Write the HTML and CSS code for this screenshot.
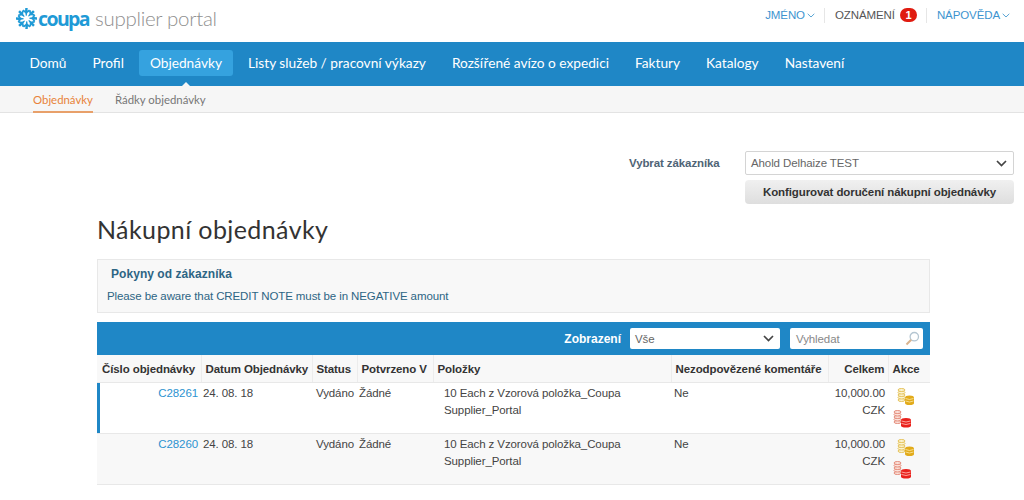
FILE: index.html
```html
<!DOCTYPE html>
<html lang="cs">
<head>
<meta charset="utf-8">
<title>Coupa supplier portal</title>
<link rel="stylesheet" href="styles.css">
</head>
<body>
<svg class="defs" width="0" height="0" aria-hidden="true">
  <symbol id="coins" viewBox="0 0 24 45">
    <g fill="#fbf3d0" stroke="#e6c35c" stroke-width="1">
      <ellipse cx="9.500" cy="15" rx="3.500" ry="1.500"/><ellipse cx="9.500" cy="12.500" rx="3.500" ry="1.500"/><ellipse cx="9.500" cy="10" rx="3.500" ry="1.500"/><ellipse cx="9.500" cy="7.500" rx="3.500" ry="1.500"/><ellipse cx="9.500" cy="5" rx="3.500" ry="1.500"/>
    </g>
    <path d="M13 12.500q0-2 4.500-2t4.500 2v5.500q0 2-4.500 2t-4.500-2z" fill="#e2ab1b"/>
    <path d="M13.500 13.500q4 2 8 0M13.500 16q4 2 8 0" fill="none" stroke="#fbe9a8" stroke-width=".8"/>
    <g fill="#fbe1da" stroke="#e58d7c" stroke-width="1">
      <ellipse cx="5.500" cy="37" rx="3.500" ry="1.500"/><ellipse cx="5.500" cy="34.500" rx="3.500" ry="1.500"/><ellipse cx="5.500" cy="32" rx="3.500" ry="1.500"/><ellipse cx="5.500" cy="29.500" rx="3.500" ry="1.500"/><ellipse cx="5.500" cy="27" rx="3.500" ry="1.500"/>
    </g>
    <path d="M9 35q0-2 5-2t5 2v5.500q0 2-5 2t-5-2z" fill="#e9211c"/>
    <path d="M9.500 36q4.500 2 9 0M9.500 38.500q4.500 2 9 0" fill="none" stroke="#ffc4ba" stroke-width=".8"/>
  </symbol>
</svg>
<header class="top">
  <div class="logo">
    <svg class="logo-star" width="21" height="21" viewBox="-11 -11 22 22" aria-hidden="true">
      <g fill="#1f9ad6">
        <path id="arm" d="M-1.300-11h2.600l-.3 2.800 1.700-1.100 1 1.500-2.900 2-.6 2.800h-.9l-.6-2.800-2.900-2 1-1.500 1.700 1.100z"/>
        <use href="#arm" transform="rotate(45)"/><use href="#arm" transform="rotate(90)"/><use href="#arm" transform="rotate(135)"/>
        <use href="#arm" transform="rotate(180)"/><use href="#arm" transform="rotate(225)"/><use href="#arm" transform="rotate(270)"/><use href="#arm" transform="rotate(315)"/>
      </g>
    </svg>
    <span class="logo-coupa">coupa</span>
    <span class="logo-sub">supplier portal</span>
  </div>
  <nav class="util">
    <a class="util-link">JMÉNO<svg class="chev" width="8" height="5" viewBox="0 0 8 5"><path d="M.7.8 4 4 7.300.8" fill="none" stroke="#5aa5d5" stroke-width="1"/></svg></a>
    <span class="util-sep"></span>
    <span class="util-note">OZNÁMENÍ<span class="badge">1</span></span>
    <span class="util-sep"></span>
    <a class="util-link">NÁPOVĚDA<svg class="chev" width="8" height="5" viewBox="0 0 8 5"><path d="M.7.8 4 4 7.300.8" fill="none" stroke="#5aa5d5" stroke-width="1"/></svg></a>
  </nav>
</header>
<nav class="mainnav">
  <a>Domů</a><a>Profil</a><a class="active">Objednávky</a><a>Listy služeb / pracovní výkazy</a><a>Rozšířené avízo o expedici</a><a>Faktury</a><a>Katalogy</a><a>Nastavení</a>
</nav>
<nav class="subnav">
  <a class="active">Objednávky</a><a>Řádky objednávky</a>
</nav>
<section class="customer">
  <div class="customer-row">
    <label class="customer-label">Vybrat zákazníka</label>
    <div class="select customer-select"><span>Ahold Delhaize TEST</span><svg width="11" height="7" viewBox="0 0 11 7"><path d="M1 1l4.500 4.500L10 1" fill="none" stroke="#444" stroke-width="1.700"/></svg></div>
  </div>
  <button class="config-btn">Konfigurovat doručení nákupní objednávky</button>
</section>
<main class="content">
  <h1>Nákupní objednávky</h1>
  <section class="notice">
    <h2>Pokyny od zákazníka</h2>
    <p>Please be aware that CREDIT NOTE must be in NEGATIVE amount</p>
  </section>
  <div class="toolbar">
    <span class="toolbar-label">Zobrazení</span>
    <div class="select view-select"><span>Vše</span><svg width="11" height="7" viewBox="0 0 11 7"><path d="M1 1l4.500 4.500L10 1" fill="none" stroke="#444" stroke-width="1.700"/></svg></div>
    <div class="search"><span>Vyhledat</span><svg width="15" height="15" viewBox="0 0 15 15"><circle cx="9.300" cy="5.700" r="4.200" fill="#fff" stroke="#b5c6d2" stroke-width="1.300"/><path d="M6.200 8.800 1.500 13.500" stroke="#d9b48f" stroke-width="2"/></svg></div>
  </div>
  <table class="orders">
    <colgroup><col class="c1"><col class="c2"><col class="c3"><col class="c4"><col class="c5"><col class="c6"><col class="c7"><col class="c8"></colgroup>
    <thead>
      <tr><th>Číslo objednávky</th><th>Datum Objednávky</th><th>Status</th><th>Potvrzeno V</th><th>Položky</th><th>Nezodpovězené komentáře</th><th class="num">Celkem</th><th>Akce</th></tr>
    </thead>
    <tbody>
      <tr class="current">
        <td class="num"><a>C28261</a></td><td class="date">24. 08. 18</td><td class="status">Vydáno</td><td class="date">Žádné</td><td class="items">10 Each z Vzorová položka_Coupa Supplier_Portal</td><td class="comment">Ne</td><td class="num">10,000.00 CZK</td>
        <td class="actions"><svg width="24" height="45"><use href="#coins"/></svg></td>
      </tr>
      <tr class="alt">
        <td class="num"><a>C28260</a></td><td class="date">24. 08. 18</td><td class="status">Vydáno</td><td class="date">Žádné</td><td class="items">10 Each z Vzorová položka_Coupa Supplier_Portal</td><td class="comment">Ne</td><td class="num">10,000.00 CZK</td>
        <td class="actions"><svg width="24" height="45"><use href="#coins"/></svg></td>
      </tr>
    </tbody>
  </table>
</main>
</body>
</html>
```

FILE: styles.css
```css
* { box-sizing: border-box; }
html, body { margin: 0; padding: 0; background: #fff; }
body { width: 1024px; height: 500px; overflow: hidden; font-family: "Liberation Sans", Arial, sans-serif; font-size: 11.500px; letter-spacing: -.1px; color: #444; }
a { color: inherit; text-decoration: none; }
.defs { position: absolute; }

.top { height: 42px; display: flex; justify-content: space-between; align-items: flex-start; padding: 0 14px 0 16px; }
.logo { display: flex; align-items: center; height: 36px; }
.logo-star { margin-right: 1px; }
.logo-coupa { font-family: "Open Sans", sans-serif; font-weight: 700; font-size: 19.500px; letter-spacing: -1.600px; color: #1f9ad6; margin-right: 6px; }
.logo-sub { font-family: Lato, sans-serif; font-weight: 300; font-size: 20.500px; letter-spacing: -.3px; color: #8f8f8f; }

.util { display: flex; align-items: center; height: 30px; }
.util-link { color: #3d94cf; display: flex; align-items: center; }
.chev { margin-left: 2px; }
.util-sep { width: 1px; height: 15px; background: #e6e6e6; margin: 0 10px 0 9px; }
.util-note { display: flex; align-items: center; color: #555; }
.badge { display: inline-block; width: 17px; height: 14px; line-height: 14px; margin-left: 5px; border-radius: 7px; background: #e01b10; color: #fff; font-weight: 700; font-size: 11px; text-align: center; }

.mainnav { height: 44px; background: #1f87c6; display: flex; align-items: center; padding: 0 0 2px 18.500px; font-family: Lato, sans-serif; font-size: 13.700px; letter-spacing: 0; color: #fff; }
.mainnav a { padding: 0 11px; margin-right: 4px; height: 26px; line-height: 26px; border-radius: 3px; }
.mainnav a.active { background: #35a2df; position: relative; }
.mainnav a.active::after { content: ""; position: absolute; left: 50%; bottom: -11px; margin-left: -5px; border: 5px solid transparent; border-top: 0; border-bottom-color: #f6f6f6; }

.subnav { height: 27px; background: #f6f6f6; border-bottom: 1px solid #e3e3e3; display: flex; padding-left: 33px; font-family: Lato, sans-serif; font-size: 11.400px; letter-spacing: 0; color: #777; }
.subnav a { margin-right: 22px; line-height: 27px; height: 27px; }
.subnav a.active { color: #e8833a; border-bottom: 2px solid #e8a06a; }

.customer { margin: 38px 10px 0 auto; width: 386px; display: flex; flex-direction: column; align-items: flex-end; }
.customer-row { display: flex; align-items: center; width: 100%; }
.customer-label { width: 116px; margin-left: 1px; color: #4f6476; font-weight: 700; }
.select { display: flex; align-items: center; justify-content: space-between; background: #fff; }
.customer-select { width: 269px; height: 24px; border: 1px solid #d4d4d4; border-radius: 2px; padding: 0 6px 0 5px; color: #666; }
.config-btn { width: 269px; height: 24px; margin-top: 5px; border: 0; border-radius: 4px; background: linear-gradient(#f0f0f0, #dedede); font-family: inherit; font-size: 11.500px; letter-spacing: -.1px; font-weight: 700; color: #333; padding: 0; }

.content { width: 833px; margin: 0 0 0 97px; }
h1 { margin: 8px 0 0; height: 47px; font-family: Lato, sans-serif; font-weight: 400; font-size: 25px; line-height: 34px; color: #333; letter-spacing: .4px; }
.notice { height: 54px; background: #f8f8f8; border: 1px solid #e8e8e8; padding: 7px 9px; }
.notice h2 { margin: 0 0 7px 4px; font-size: 12px; letter-spacing: .05px; font-weight: 700; color: #2d6584; line-height: 15px; }
.notice p { margin: 0; color: #2d6584; line-height: 15px; }

.toolbar { margin-top: 9px; height: 33px; background: #1f87c6; display: flex; align-items: center; justify-content: flex-end; padding-right: 7px; color: #fff; }
.toolbar-label { font-weight: 700; font-size: 12px; letter-spacing: 0; margin-right: 9px; }
.view-select { width: 150px; height: 21px; border-radius: 2px; padding: 0 6px 0 5px; color: #666; margin-right: 10px; }
.search { width: 133px; height: 21px; background: #fff; border-radius: 2px; padding: 0 3px 0 6px; color: #888; display: flex; align-items: center; justify-content: space-between; }

.orders { width: 833px; table-layout: fixed; border-collapse: collapse; }
.c1 { width: 104px; } .c2 { width: 111px; } .c3 { width: 45px; } .c4 { width: 76px; } .c5 { width: 238px; } .c6 { width: 157px; } .c7 { width: 60px; } .c8 { width: 42px; }
.orders th { height: 27px; padding: 1px 3px 0 4px; background: #f8f8f8; border-left: 1px solid #ececec; border-bottom: 1px solid #e8e8e8; font-weight: 700; color: #333; text-align: left; white-space: nowrap; }
.orders th:first-child { border-left: 0; padding-left: 5px; }
.orders th.num { text-align: right; }
.orders td { height: 51px; padding: 2px 4px 0 4px; vertical-align: top; line-height: 17px; border-bottom: 1px solid #e8e8e8; color: #444; }
.orders td.num { text-align: right; padding-right: 3px; }
.orders td a { color: #2c93d0; }
.orders td.date { padding-left: 2px; }
.orders td.status { padding-left: 4px; }
.orders td.comment { padding-left: 3px; }
.orders td.items { padding-left: 11px; padding-right: 30px; }
.orders td.actions { padding: 2px 0 0 4px; }
.orders svg { display: block; }
.current td:first-child { box-shadow: inset 3px 0 0 #1f87c6; }
.alt td { background: #f8f8f8; }
```
